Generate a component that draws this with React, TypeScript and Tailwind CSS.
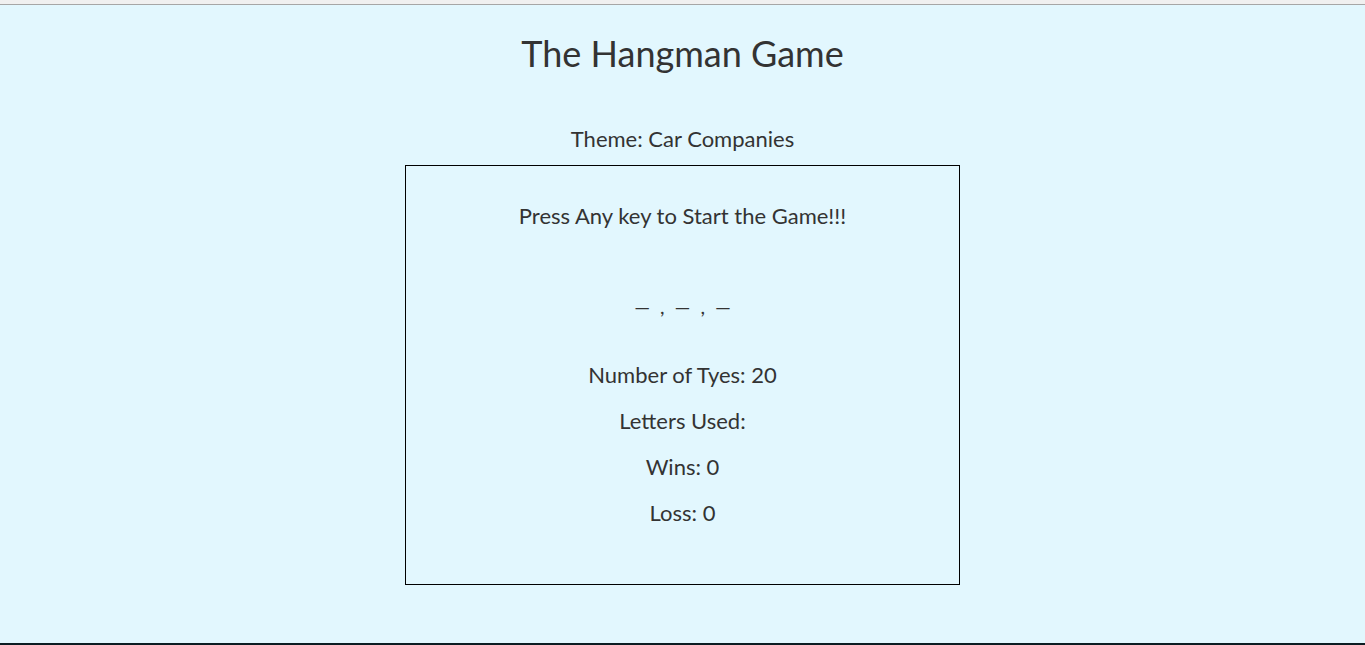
const App = () => {
  const stats = ["Number of Tyes: 20", "Letters Used:", "Wins: 0", "Loss: 0"];

  return (
    <div className="flex h-screen flex-col bg-[#e2f7fe] text-[#333333] font-['Lato','Liberation_Sans',sans-serif]">
      <div className="h-[4px] shrink-0 bg-[#f0f0f0]" />
      <div className="h-px shrink-0 bg-[#a6a6a6]" />

      <div className="flex flex-1 flex-col items-center">
        <h1 className="mt-[25px] h-[46px] text-[36px] leading-[46px]">The Hangman Game</h1>

        <p className="mt-[48px] h-[30px] text-[22px] leading-[30px]">Theme: Car Companies</p>

        <div className="mt-[11px] flex h-[420px] w-[555px] flex-col items-center border border-black pt-[35px]">
          <p className="h-[30px] text-[22px] leading-[30px]">Press Any key to Start the Game!!!</p>

          <p className="mt-[60px] flex h-[30px] items-center gap-[10px] text-[20px] leading-[30px]">
            <span>—</span>
            <span>,</span>
            <span>—</span>
            <span>,</span>
            <span>—</span>
          </p>

          <div className="mt-[39px] flex flex-col items-center gap-[16px]">
            {stats.map((s) => (
              <p key={s} className="h-[30px] text-[22px] leading-[30px]">
                {s}
              </p>
            ))}
          </div>
        </div>
      </div>

      <div className="h-[2px] shrink-0 bg-[#0b1c22]" />
    </div>
  );
};

export default App;
